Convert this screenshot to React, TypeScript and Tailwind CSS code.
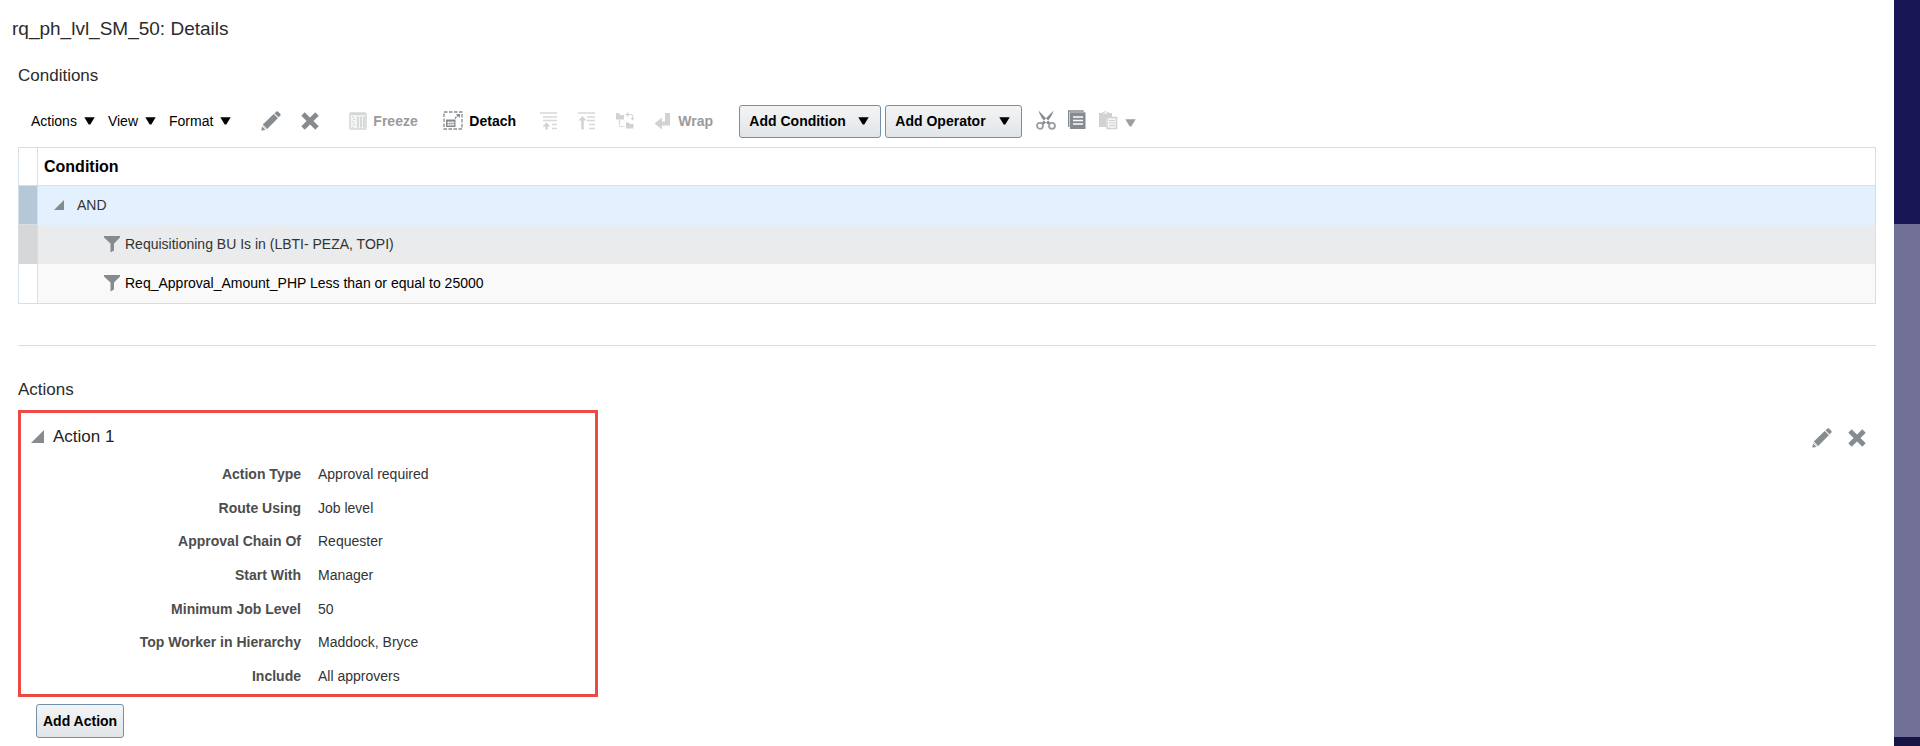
import type { ReactNode } from "react";
import { clsx } from "clsx";

interface ConditionRow {
  text: string;
  rowClass: string;
  handleClass: string;
}

const conditions: ConditionRow[] = [
  {
    text: "Requisitioning BU Is in (LBTI- PEZA, TOPI)",
    rowClass: "h-[39px] bg-[#eaebec] text-[#333333]",
    handleClass: "bg-[#d6d7d8]",
  },
  {
    text: "Req_Approval_Amount_PHP Less than or equal to 25000",
    rowClass: "h-10 bg-[#f9f9f9] text-black",
    handleClass: "bg-white",
  },
];

const actionFields = [
  { label: "Action Type", value: "Approval required" },
  { label: "Route Using", value: "Job level" },
  { label: "Approval Chain Of", value: "Requester" },
  { label: "Start With", value: "Manager" },
  { label: "Minimum Job Level", value: "50" },
  { label: "Top Worker in Hierarchy", value: "Maddock, Bryce" },
  { label: "Include", value: "All approvers" },
];

function Caret({ className = "text-black" }: { className?: string }) {
  return (
    <svg width="11" height="8" viewBox="0 0 11 8" className={className}>
      <path d="M0.3 0.3h10.4L6.3 7.6H4.7z" fill="currentColor" />
    </svg>
  );
}

function PencilIcon() {
  return (
    <svg width="20" height="20" viewBox="0 0 20 20" fill="#868b90">
      <path d="M0.3 19.6 1 15.5 4.5 19z" />
      <path d="M1.8 13.6 12.7 3.1l4.1 4.1L6.2 18z" />
      <path d="M13.6 2.2 15.2.7q1-.8 2 0l2 2q.9 1 0 2l-1.5 1.6z" />
      <path d="M13.1 2.7l4.2 4.1" stroke="#c9cbcd" strokeWidth="1" />
      <path d="M1.5 14.5l4 4" stroke="#c9cbcd" strokeWidth="1" />
    </svg>
  );
}

function CrossIcon() {
  return (
    <svg width="18" height="18" viewBox="0 0 18 18" fill="none">
      <path
        d="M3.7 3.7l10.6 10.6M14.3 3.7L3.7 14.3"
        stroke="#868b90"
        strokeWidth="4.8"
        strokeLinecap="square"
      />
    </svg>
  );
}

function FreezeIcon() {
  return (
    <svg width="18" height="18" viewBox="0 0 18 18" fill="none">
      <rect x="1" y="1" width="16" height="16" rx="1" fill="#f4f4f4" stroke="#d3d5d6" strokeWidth="1.5" />
      <path d="M1 2h16" stroke="#d3d5d6" strokeWidth="2" />
      <path d="M9 4.5v11M12 4.5v11M15 4.5v11" stroke="#cccecf" strokeWidth="1.5" />
      <path d="M3 5h2M4 7.5h2M3 10h2M4 12.5h2M3 15h2" stroke="#d3d5d6" />
    </svg>
  );
}

function DetachIcon() {
  return (
    <svg width="20" height="20" viewBox="0 0 20 20" fill="none" stroke="#868b90">
      <rect x="1" y="1" width="18" height="17" strokeWidth="1.3" strokeDasharray="3.5 1.5" />
      <path d="M3 8.5h9.5v7.5H3z" fill="#868b90" stroke="none" />
      <path d="M4 11.5h7.5M4 13.7h7.5M5.7 10v5M7.8 10v5M9.9 10v5" stroke="#ffffff" strokeWidth="0.7" />
      <path d="M12 7.5l3.5-3.5" strokeWidth="1.5" strokeDasharray="2 0.7" />
      <path d="M13 3h4v4z" fill="#868b90" stroke="none" />
    </svg>
  );
}

function GoUpIcon() {
  return (
    <svg width="18" height="18" viewBox="0 0 18 18" fill="none" stroke="#d6d8d9">
      <path d="M0 1h17M3 5h14M3 8.5h14M12 12.5h5M12 16.5h5" strokeWidth="1.5" />
      <path d="M6.5 17.5v-4" stroke="#d0d2d4" strokeWidth="2.5" />
      <path d="M2.5 14.5l4-4 4 4z" fill="#d0d2d4" stroke="none" />
    </svg>
  );
}

function GoTopIcon() {
  return (
    <svg width="18" height="18" viewBox="0 0 18 18" fill="none" stroke="#d6d8d9">
      <path d="M0 1h17M9 5h8M9 8.5h8M11 12.5h6M11 16.5h6" strokeWidth="1.5" />
      <path d="M4.5 17.5V7" stroke="#d0d2d4" strokeWidth="2.5" />
      <path d="M.5 8.5l4-4.5 4 4.5z" fill="#d0d2d4" stroke="none" />
    </svg>
  );
}

function ShowTreeIcon() {
  return (
    <svg width="18" height="18" viewBox="0 0 18 18" fill="#d0d2d4">
      <path d="M0 1h3l1 2h4v4.5H0zM10 10.5h3l1 1.5h3.5v4.5H10z" />
      <path
        d="M3.5 8v6.5H9M11 2.5h5.5V7"
        fill="none"
        stroke="#d6d8d9"
        strokeDasharray="5 0.7"
        strokeWidth="1.2"
      />
      <path d="M9.5 2.5 12.5 0v5zM14.5 6h4L16.5 8.5z" />
    </svg>
  );
}

function WrapIcon() {
  return (
    <svg width="18" height="18" viewBox="0 0 18 18" fill="#d0d2d4">
      <path d="M11 1h5v12.5H8v4L.5 11.500 8 5.500v4h3z" />
    </svg>
  );
}

function CutIcon() {
  return (
    <svg width="20" height="20" viewBox="0 0 20 20" fill="none">
      <path
        d="M2.5 0.5 14.5 13l-2.500 1.500Q4.500 8.500 2.500 0.500zM17.500 0.500 5.500 13l2.500 1.500Q15.500 8.500 17.500 0.500z"
        fill="#868b90"
      />
      <circle cx="4" cy="15.8" r="3" fill="#ffffff" stroke="#9b9fa3" strokeWidth="1.8" />
      <circle cx="16" cy="15.8" r="3" fill="#ffffff" stroke="#9b9fa3" strokeWidth="1.8" />
    </svg>
  );
}

function CopyIcon() {
  return (
    <svg width="18" height="20" viewBox="0 0 18 20" fill="none">
      <path d="M.7 17V1h15" stroke="#868b90" strokeWidth="1.4" />
      <path d="M2 2.3H17.5V19H2z" fill="#868b90" />
      <path d="M5 7h10M5 10.5h10M5 14h10" stroke="#ffffff" strokeWidth="1.3" />
    </svg>
  );
}

function PasteIcon() {
  return (
    <svg width="20" height="20" viewBox="0 0 20 20" fill="none">
      <path d="M1 3h13v4H8v10H1z" fill="#d0d2d4" />
      <path d="M4.5 4V2.5h1.5Q7.5 0 9 2.5h1.5V4z" fill="#ffffff" stroke="#d0d2d4" />
      <path d="M9 7.5h9.5V18.5H9z" fill="#f5f5f5" stroke="#d0d2d4" strokeWidth="1.5" />
      <path d="M11 10.5h6M11 13h6M11 15.5h6" stroke="#d0d2d4" />
    </svg>
  );
}

function FunnelIcon() {
  return (
    <svg width="16" height="18" viewBox="0 0 16 18" fill="#868b90">
      <path d="M0 1h16v1.5L10 8.5V15.5L6.5 17.5V8.5L0 2.5z" />
    </svg>
  );
}

function DisclosureIcon({ className }: { className?: string }) {
  return (
    <svg viewBox="0 0 14 14" className={clsx("shrink-0", className)} fill="#868b90">
      <path d="M14 0v14H0z" />
    </svg>
  );
}

function MenuButton({ children }: { children: ReactNode }) {
  return (
    <button type="button" className="flex items-center gap-[7px] pb-0.5 text-black">
      {children}
      <Caret />
    </button>
  );
}

function BoxButton({ children, className }: { children: ReactNode; className?: string }) {
  return (
    <button
      type="button"
      className={clsx(
        "flex items-center rounded-[3px] border border-[#7290ab] bg-linear-to-b from-[#f3f4f5] to-[#e1e5e8] font-bold text-black",
        className,
      )}
    >
      {children}
    </button>
  );
}

function Toolbar() {
  return (
    <div className="flex h-[33px] items-center pl-[13px]">
      <div className="flex gap-[13px]">
        <MenuButton>Actions</MenuButton>
        <MenuButton>View</MenuButton>
        <MenuButton>Format</MenuButton>
      </div>
      <div className="ml-[30px] flex items-center gap-5 pb-0.5">
        <button type="button" aria-label="Edit">
          <PencilIcon />
        </button>
        <button type="button" aria-label="Delete">
          <CrossIcon />
        </button>
      </div>
      <button
        type="button"
        disabled
        className="ml-[30px] flex w-[94px] items-center gap-[6px] pb-0.5 font-bold text-[#9b9b9b]"
      >
        <FreezeIcon />
        Freeze
      </button>
      <button type="button" className="flex w-[97px] items-center gap-[6px] pb-0.5 font-bold text-black">
        <DetachIcon />
        Detach
      </button>
      <div className="flex items-center gap-5 pb-0.5">
        <button type="button" disabled aria-label="Go Up">
          <GoUpIcon />
        </button>
        <button type="button" disabled aria-label="Go to Top">
          <GoTopIcon />
        </button>
        <button type="button" disabled aria-label="Show as Top">
          <ShowTreeIcon />
        </button>
        <button type="button" disabled className="flex w-[85px] items-center gap-[6px] font-bold text-[#9b9b9b]">
          <WrapIcon />
          Wrap
        </button>
      </div>
      <div className="flex gap-1">
        <BoxButton className="h-[33px] w-[142px] justify-between pr-[11px] pb-0.5 pl-[9px]">
          Add Condition
          <Caret />
        </BoxButton>
        <BoxButton className="h-[33px] w-[137px] justify-between pr-[11px] pb-0.5 pl-[9px]">
          Add Operator
          <Caret />
        </BoxButton>
      </div>
      <div className="ml-[14px] flex items-center gap-3 pb-1">
        <button type="button" aria-label="Cut">
          <CutIcon />
        </button>
        <button type="button" aria-label="Copy">
          <CopyIcon />
        </button>
        <button type="button" disabled className="flex items-end gap-[7px]" aria-label="Paste">
          <PasteIcon />
          <span className="pb-[3px]">
            <Caret className="text-[#9b9fa3]" />
          </span>
        </button>
      </div>
    </div>
  );
}

function ConditionTable() {
  return (
    <table className="mt-[9px] w-full border-collapse border border-[#d6dfe6] text-left">
      <thead>
        <tr className="h-[38px] border-b border-[#d6dfe6]">
          <td className="w-[19px] border-r border-[#d6dfe6]" />
          <th className="pl-[6px] text-base font-bold text-black">Condition</th>
        </tr>
      </thead>
      <tbody>
        <tr className="h-[39px] bg-[#e3f1ff] text-[#333333]">
          <td className="border-r border-b border-[#d6dfe6] bg-[#b4c8d8]" />
          <td className="pl-4">
            <div className="flex items-center gap-[13px]">
              <button type="button" aria-label="Collapse AND">
                <DisclosureIcon className="size-[10px]" />
              </button>
              AND
            </div>
          </td>
        </tr>
        {conditions.map((row) => (
          <tr key={row.text} className={row.rowClass}>
            <td className={clsx("border-r border-[#d6dfe6]", row.handleClass)} />
            <td className="pl-[66px]">
              <div className="flex items-center gap-[5px]">
                <FunnelIcon />
                {row.text}
              </div>
            </td>
          </tr>
        ))}
      </tbody>
    </table>
  );
}

function ActionPanel() {
  return (
    <div className="mt-2 flex items-start justify-between">
      {/* Highlighted action */}
      <div className="w-[580px] border-3 border-[#ed4a45] pt-3 pb-px">
        <h3 className="flex items-center gap-[9px] pl-[10px] text-[17px] leading-6 text-[#222222]">
          <button type="button" aria-label="Collapse Action 1" className="pb-0.5">
            <DisclosureIcon className="size-[13px]" />
          </button>
          Action 1
        </h3>
        <dl className="mt-2 grid h-[236px] grid-rows-7">
          {actionFields.map((field) => (
            <div key={field.label} className="flex items-center gap-[17px]">
              <dt className="w-[280px] text-right font-bold text-[#4d4d4d]">{field.label}</dt>
              <dd className="text-[#333333]">{field.value}</dd>
            </div>
          ))}
        </dl>
      </div>
      <div className="flex items-center gap-4 pt-[18px] pr-[10px]">
        <button type="button" aria-label="Edit Action 1">
          <PencilIcon />
        </button>
        <button type="button" aria-label="Delete Action 1">
          <CrossIcon />
        </button>
      </div>
    </div>
  );
}

export default function App() {
  return (
    <div className="flex min-h-screen bg-white font-['Liberation_Sans',Arial,sans-serif] text-sm">
      <main className="min-w-0 flex-1 px-[18px] pb-[6px]">
        <h1 className="-ml-[6px] pt-[17px] text-[19px] leading-6 text-[#2b2b2b]">rq_ph_lvl_SM_50: Details</h1>
        <h2 className="mt-[23px] mb-[17px] text-[17px] leading-6 text-[#2b2b2b]">Conditions</h2>
        <Toolbar />
        <ConditionTable />
        <hr className="mt-[41px] border-[#d6dfe6]" />
        <h2 className="mt-8 text-[17px] leading-6 text-[#2b2b2b]">Actions</h2>
        <ActionPanel />
        <BoxButton className="mt-[7px] ml-[18px] h-[34px] px-[6px]">Add Action</BoxButton>
      </main>
      {/* Page edge behind the dialog */}
      <div className="flex w-[26px] shrink-0 flex-col bg-[#717197]">
        <div className="h-56 bg-[#181655]" />
        <div className="flex-1" />
        <div className="h-[9px] bg-[#161546]" />
      </div>
    </div>
  );
}
